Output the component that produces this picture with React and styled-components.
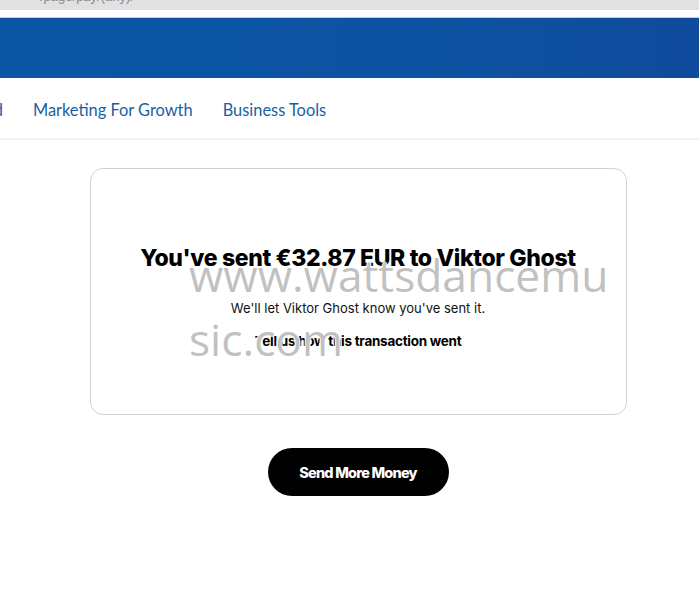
import React from 'react';
import styled, { createGlobalStyle } from 'styled-components';

const Global = createGlobalStyle`
  html, body { margin: 0; padding: 0; background: #fff; }
  body { font-family: "Inter", "Liberation Sans", sans-serif; }
`;

const Page = styled.div`
  position: relative;
  width: 699px;
  height: 589px;
  overflow: hidden;
  background: #fff;
`;

const BrowserStrip = styled.div`
  height: 10px;
  background: #e1e1e3;
  overflow: hidden;
  padding-left: 40px;
`;

const UrlText = styled.span`
  display: block;
  margin-top: -10px;
  font-family: "Liberation Sans", sans-serif;
  font-size: 13px;
  line-height: 14px;
  color: #888;
`;

const Gap = styled.div`
  height: 7px;
  background: #fff;
  border-bottom: 1px solid #b9cde3;
`;

const Banner = styled.div`
  height: 60px;
  background: linear-gradient(90deg, #0a56a5 0%, #0d52a2 60%, #104b9d 100%);
`;

const Nav = styled.nav`
  height: 62px;
  display: flex;
  align-items: center;
  gap: 30px;
  margin-left: -28px;
  border-bottom: 2px solid #f2f2f2;
  font-family: "Lato", "Open Sans", sans-serif;
  font-size: 16.4px;
  color: #1a5fa3;
  padding-top: 2px;
  box-sizing: border-box;
`;

const NavLink = styled.span`
  white-space: nowrap;
`;

const Main = styled.main`
  display: flex;
  flex-direction: column;
  align-items: center;
  padding-top: 28px;
  padding-left: 17px;
`;

const Card = styled.section`
  width: 537px;
  height: 247px;
  box-sizing: border-box;
  border: 1px solid #d2d2d2;
  border-radius: 13px;
  display: flex;
  flex-direction: column;
  align-items: center;
  padding-top: 73px;
`;

const Title = styled.h1`
  margin: 0;
  font-family: "Inter", sans-serif;
  font-weight: 800;
  font-size: 23px;
  letter-spacing: -0.35px;
  line-height: 32px;
  color: #000;
`;

const Sub = styled.p`
  margin: 26px 0 0;
  font-family: "Inter", sans-serif;
  font-size: 13px;
  color: #111;
`;

const Feedback = styled.p`
  margin: 17px 0 0;
  font-family: "Inter", sans-serif;
  font-weight: 700;
  font-size: 13.5px;
  letter-spacing: -0.27px;
  color: #000;
`;

const PrimaryButton = styled.button`
  margin-top: 33px;
  width: 181px;
  height: 48px;
  border: none;
  border-radius: 24px;
  background: #000;
  color: #fff;
  font-family: "Inter", sans-serif;
  font-weight: 800;
  font-size: 14.5px;
  letter-spacing: -0.8px;
`;

const Watermark = styled.div`
  position: absolute;
  left: 189px;
  top: 243px;
  width: 425px;
  font-family: "Open Sans", sans-serif;
  font-size: 44.3px;
  line-height: 64px;
  color: rgba(165, 165, 165, 0.7);
  text-shadow: 1px 0 1px #fff, -1px 0 1px #fff, 0 1px 1px #fff, 0 -1px 1px #fff;
  word-break: break-all;
  pointer-events: none;
`;

export default function App() {
  return (
    <Page>
      <Global />
      <BrowserStrip>
        <UrlText>/page/pay/(any)/</UrlText>
      </BrowserStrip>
      <Gap />
      <Banner />
      <Nav>
        <NavLink>Grid</NavLink>
        <NavLink>Marketing For Growth</NavLink>
        <NavLink>Business Tools</NavLink>
      </Nav>
      <Main>
        <Card>
          <Title>You've sent €32.87 EUR to Viktor Ghost</Title>
          <Sub>We'll let Viktor Ghost know you've sent it.</Sub>
          <Feedback>Tell us how this transaction went</Feedback>
        </Card>
        <PrimaryButton>Send More Money</PrimaryButton>
      </Main>
      <Watermark>www.wattsdancemusic.com</Watermark>
    </Page>
  );
}
